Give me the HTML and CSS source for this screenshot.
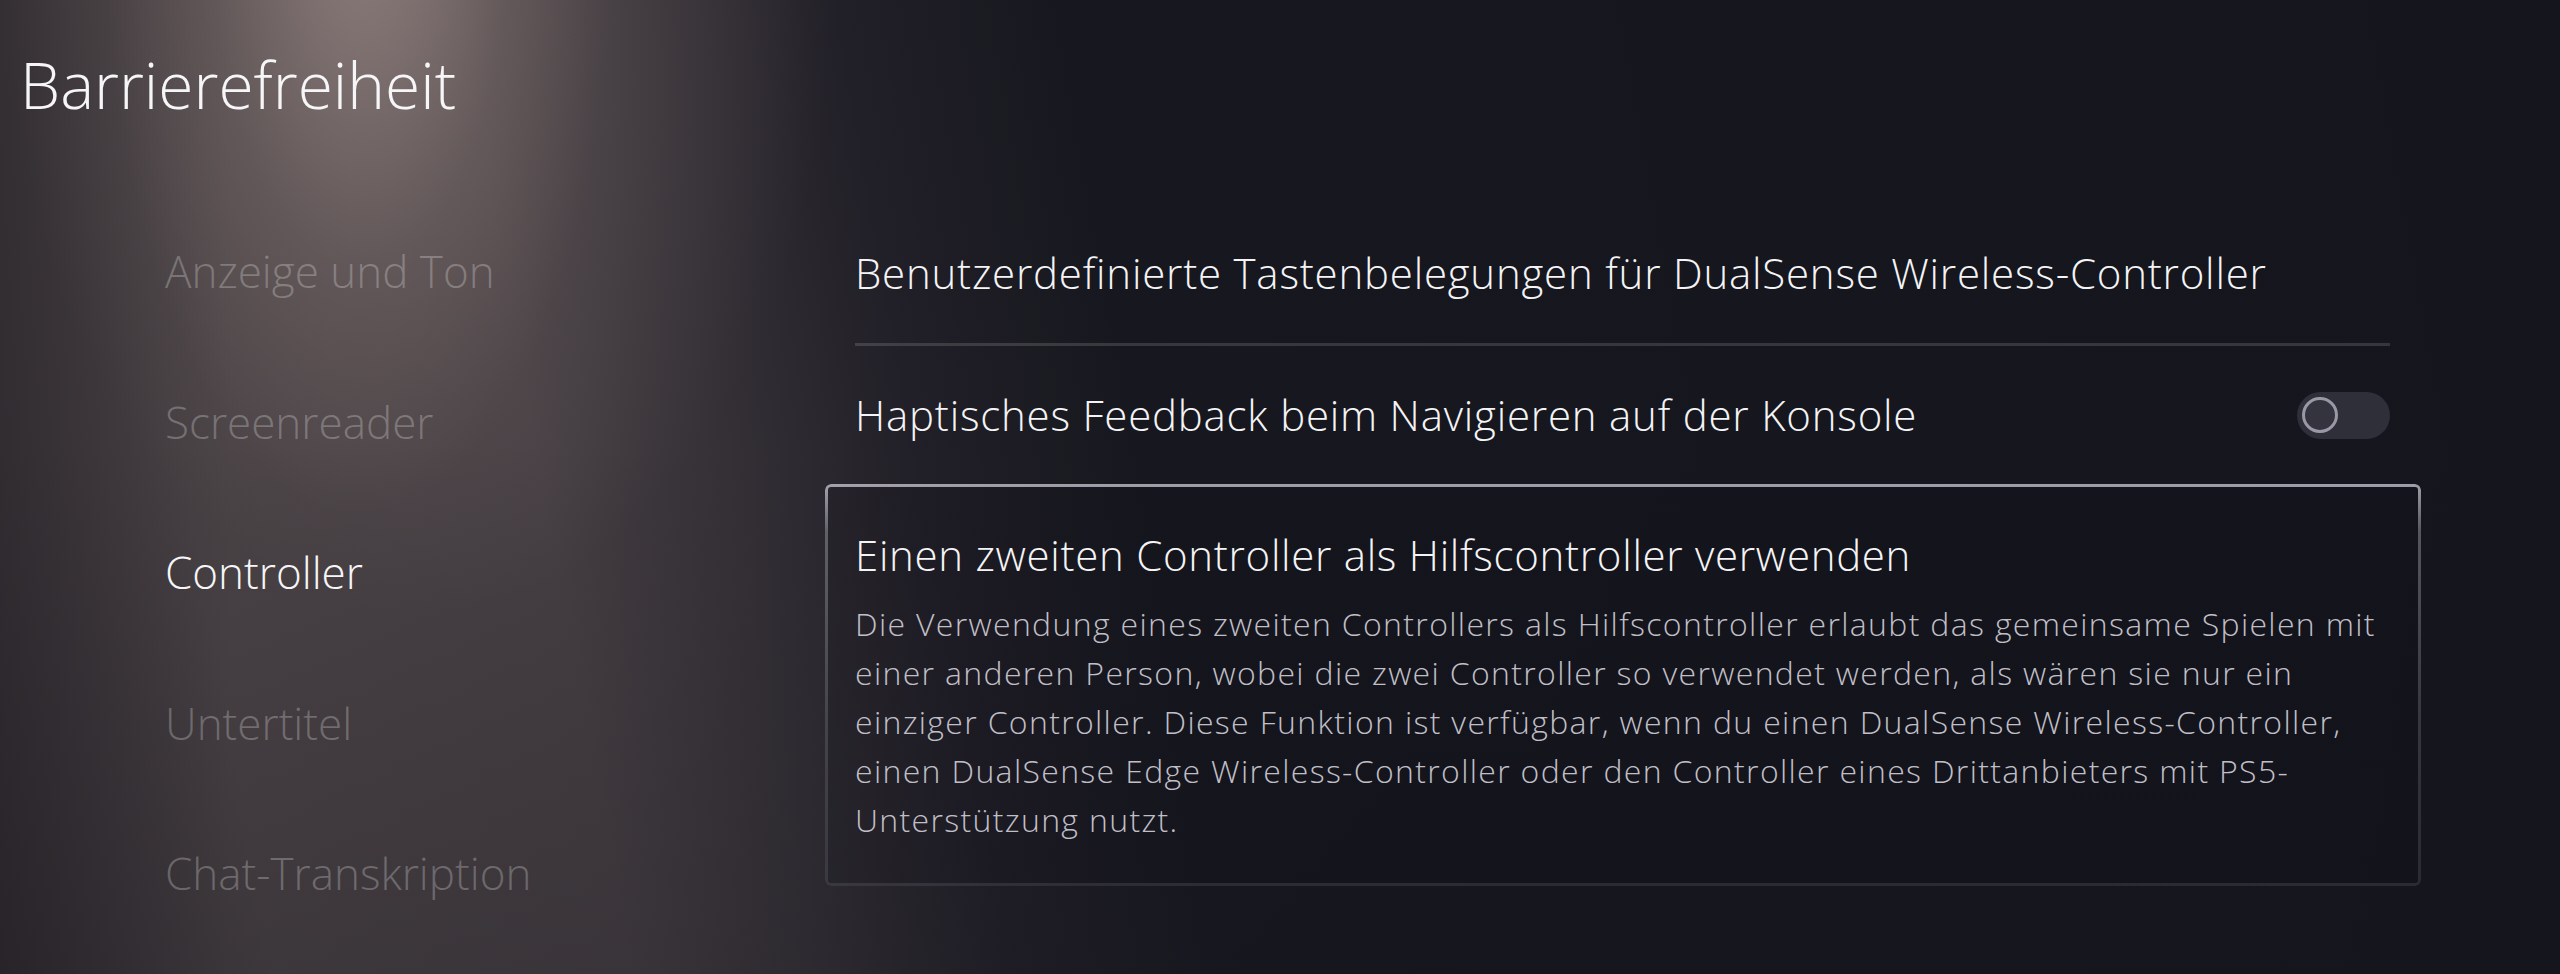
FILE: index.html
```html
<!DOCTYPE html>
<html lang="de">
<head>
<meta charset="utf-8">
<title>Barrierefreiheit</title>
<link rel="stylesheet" href="styles.css">
</head>
<body>
<div class="page">
  <h1 class="title">Barrierefreiheit</h1>
  <div class="main">
    <nav class="nav">
      <div class="nav-item">Anzeige und Ton</div>
      <div class="nav-item">Screenreader</div>
      <div class="nav-item active">Controller</div>
      <div class="nav-item">Untertitel</div>
      <div class="nav-item">Chat-Transkription</div>
    </nav>
    <section class="content">
      <div class="row row-first">
        <span class="row-label">Benutzerdefinierte Tastenbelegungen für DualSense Wireless-Controller</span>
      </div>
      <div class="row row-toggle">
        <span class="row-label">Haptisches Feedback beim Navigieren auf der Konsole</span>
        <span class="toggle"><span class="knob"></span></span>
      </div>
      <div class="card">
        <div class="card-title">Einen zweiten Controller als Hilfscontroller verwenden</div>
        <p class="card-desc">Die Verwendung eines zweiten Controllers als Hilfscontroller erlaubt das gemeinsame Spielen mit<br>einer anderen Person, wobei die zwei Controller so verwendet werden, als wären sie nur ein<br>einziger Controller. Diese Funktion ist verfügbar, wenn du einen DualSense Wireless-Controller,<br>einen DualSense Edge Wireless-Controller oder den Controller eines Drittanbieters mit PS5-<br>Unterstützung nutzt.</p>
      </div>
    </section>
  </div>
</div>
</body>
</html>
```
FILE: styles.css
```css
html, body {
  margin: 0;
  padding: 0;
}
body {
  width: 2560px;
  height: 974px;
  overflow: hidden;
  font-family: "Open Sans", Lato, "Noto Sans", sans-serif;
  font-weight: 300;
  color: #f4f4f6;
  background-color: #14151d;
  background-image:
    radial-gradient(ellipse 300px 700px at 360px -80px, rgba(185,165,160,0.5) 0%, rgba(150,132,128,0.2) 50%, rgba(120,105,105,0) 85%),
    radial-gradient(ellipse 520px 820px at 420px -40px, rgba(150,132,128,0.32) 0%, rgba(120,105,105,0) 80%),
    linear-gradient(to right, rgba(22,20,26,0.35) 0%, rgba(22,20,26,0) 9%),
    linear-gradient(to bottom, rgba(20,20,28,0) 45%, rgba(20,20,28,0.25) 100%),
    linear-gradient(80deg, #3b3539 0%, #4a4346 10%, #463f43 23%, #343036 30%, #211f27 37%, #17181f 45%, #14151d 100%);
}
.page {
  width: 2560px;
  height: 974px;
}
.title {
  margin: 0;
  padding: 53px 0 0 20px;
  font-size: 64px;
  line-height: 64px;
  font-weight: 300;
  color: #f6f6f8;
}
.main {
  display: flex;
  margin-top: 79px;
}
.nav {
  width: 825px;
  box-sizing: border-box;
  padding-left: 165px;
  display: flex;
  flex-direction: column;
}
.nav-item {
  font-size: 44px;
  line-height: 150.5px;
  height: 150.5px;
  color: rgba(255,255,255,0.25);
  white-space: nowrap;
}
.nav-item.active {
  color: #f6f6f8;
}
.content {
  width: 1596px;
  display: flex;
  flex-direction: column;
}
.row {
  margin: 0 31px 0 30px;
  font-size: 42px;
  line-height: 50px;
  letter-spacing: 0.78px;
  white-space: nowrap;
}
.row-first {
  padding: 52px 0 45px;
  border-bottom: 3px solid rgba(255,255,255,0.14);
}
.row-toggle {
  height: 138px;
  display: flex;
  align-items: center;
  justify-content: space-between;
}
.toggle {
  width: 93px;
  height: 47px;
  border-radius: 24px;
  background: #2f2f39;
  display: flex;
  align-items: center;
  padding-left: 5px;
  box-sizing: border-box;
}
.knob {
  width: 36px;
  height: 36px;
  box-sizing: border-box;
  border-radius: 50%;
  border: 3px solid #9a98a6;
  background: #34343e;
}
.card {
  position: relative;
  height: 402px;
  box-sizing: border-box;
  padding: 46px 27px 0 30px;
  border-radius: 6px;
  background: rgba(12,12,18,0.12);
}
.card::before {
  content: "";
  position: absolute;
  inset: 0;
  border-radius: 6px;
  padding: 3px;
  background: linear-gradient(to bottom, rgba(215,212,225,0.72) 0%, rgba(180,178,190,0.42) 12%, rgba(160,158,170,0.25) 60%, rgba(150,148,160,0.18) 100%);
  -webkit-mask: linear-gradient(#000 0 0) content-box, linear-gradient(#000 0 0);
  -webkit-mask-composite: xor;
  mask-composite: exclude;
  pointer-events: none;
}
.card-title {
  font-size: 42px;
  line-height: 50px;
  letter-spacing: 0.7px;
  white-space: nowrap;
  color: #f4f4f6;
}
.card-desc {
  margin: 19px 0 0;
  font-size: 32px;
  line-height: 49px;
  letter-spacing: 1.33px;
  color: #c0bfc7;
  white-space: nowrap;
}
```
